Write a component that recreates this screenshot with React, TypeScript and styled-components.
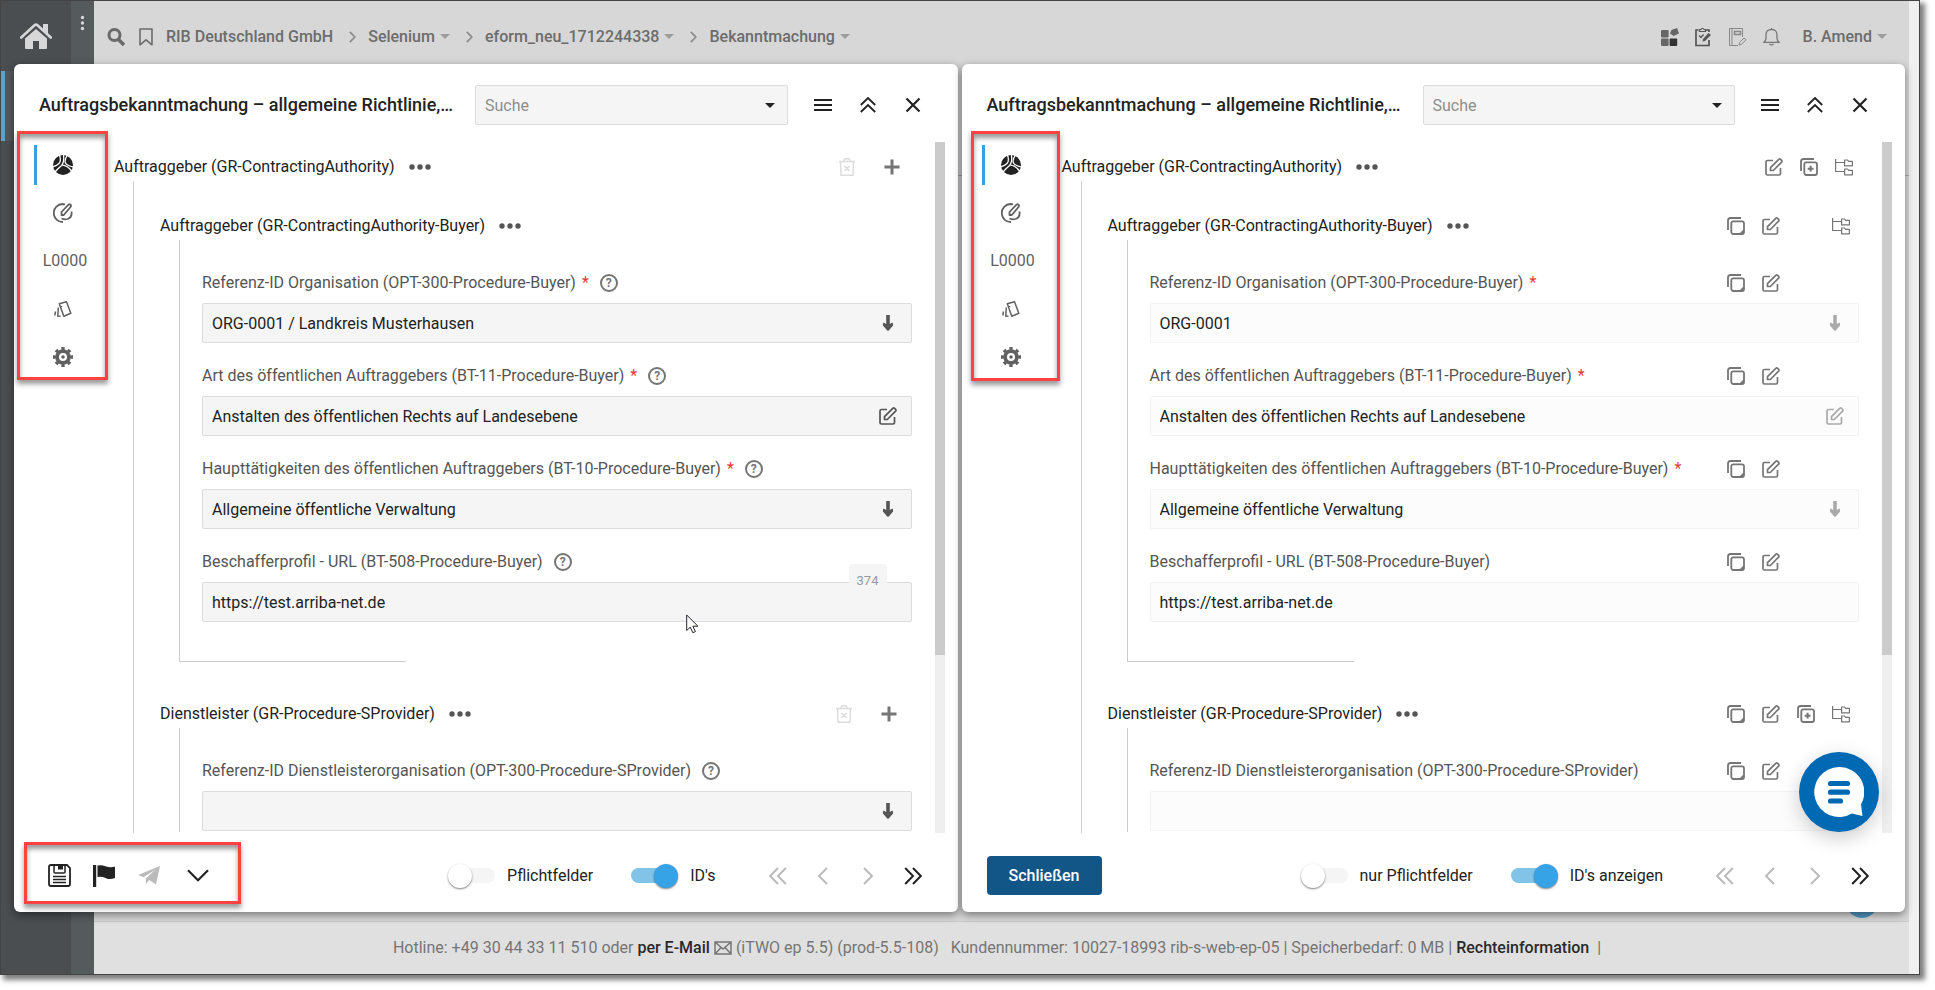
import React, { useId } from "react";
import styled, { createGlobalStyle, css } from "styled-components";

const GlobalStyle = createGlobalStyle`
  *, *::before, *::after { box-sizing: border-box; }
  body { margin: 0; background: #fff; font-family: Roboto, "Liberation Sans", sans-serif; font-size: 16px; line-height: 20px; color: #222; }
  button, input { font: inherit; color: inherit; }
  svg { display: block; flex: none; }
`;

/* ---------- application behind the dialogs ---------- */

const Frame = styled.div`
  position: relative;
  display: flex;
  height: calc(100vh - 15px);
  min-height: 700px;
  margin: 0 15px 15px 0;
  border: 1px solid #444;
  box-shadow: 4px 4px 5px 1px rgba(0, 0, 0, 0.5);
  background: #d8d8d8;
`;

const Sidebar = styled.nav`
  width: 70px;
  background: #4a4e51;
`;

const HomeLink = styled.a`
  display: flex;
  align-items: center;
  justify-content: center;
  height: 70px;
  color: #d7d7d7;
`;

const ActiveModule = styled.div`
  height: 70px;
  border-left: 4px solid #56a3d4;
  background: #55595c;
`;

const SideStrip = styled.div`
  display: flex;
  flex-direction: column;
  align-items: center;
  width: 23px;
  padding-top: 14px;
  background: #555a5d;
  color: #d7d7d7;
`;

const Workspace = styled.div`
  flex: 1;
  min-width: 0;
  display: flex;
  flex-direction: column;
`;

const TopBar = styled.header`
  display: flex;
  align-items: center;
  height: 71px;
  padding: 0 22px 0 13px;
  background: #d7d7d7;
  color: #6a6a6a;
`;

const Breadcrumb = styled.ol`
  flex: 1;
  display: flex;
  align-items: center;
  margin: 0;
  padding: 0 0 0 8px;
  list-style: none;
  font-weight: 500;
  color: #6c6c6c;
`;

const Crumb = styled.li`
  display: flex;
  align-items: center;
  a { color: inherit; text-decoration: none; }
`;

const Caret = styled.span<{ $color?: string }>`
  flex: none;
  width: 10px;
  border: 5px solid transparent;
  border-top-color: ${(p) => p.$color ?? "#9d9d9d"};
  border-bottom-width: 0;
`;

const CrumbCaret = styled(Caret)`
  margin-left: 5px;
`;

const CrumbSeparator = styled.span`
  margin: 0 12px 0 16px;
  color: #8d8d8d;
`;

const TopTools = styled.div`
  display: flex;
  align-items: center;
  gap: 10px;
  color: #666;
`;

const UserMenu = styled.button`
  display: flex;
  align-items: center;
  margin-left: 9px;
  padding: 0;
  border: 0;
  background: none;
  font-weight: 500;
  color: #6c6c6c;
`;

const WorkArea = styled.main`
  flex: 1;
  margin-top: 103px;
  border-top: 1px solid #aaa;
  display: flex;
  justify-content: flex-end;
  align-items: flex-end;
  padding: 0 31px 3px 0;
`;

const AssistDot = styled.span`
  width: 32px;
  height: 32px;
  border-radius: 50%;
  background: #5299c4;
`;

const StatusBar = styled.footer`
  display: flex;
  align-items: center;
  justify-content: center;
  height: 53px;
  padding-right: 9px;
  border-top: 1px solid #c9c9c9;
  background: #e0e0e0;
  color: #757575;
  white-space: pre;
  a { color: #2a2a2a; font-weight: 500; text-decoration: none; }
  svg { margin: 0 4px; }
`;

const WindowScroll = styled.div`
  width: 10px;
  background: #f0f0f0;
`;

/* ---------- dialogs ---------- */

const DialogLayer = styled.div`
  position: absolute;
  inset: 63px 14px 62px 13px;
  display: grid;
  grid-template-columns: 1fr 1fr;
  gap: 4px;
`;

const Dialog = styled.section`
  position: relative;
  display: flex;
  flex-direction: column;
  min-width: 0;
  min-height: 0;
  border-radius: 6px;
  background: #fff;
  box-shadow: 0 3px 8px rgba(0, 0, 0, 0.45);
`;

const DialogHeader = styled.header`
  display: flex;
  align-items: center;
  height: 78px;
  padding: 4px 33px 0 25px;
`;

const DialogTitle = styled.h2`
  flex: none;
  width: 436px;
  margin: 0;
  font-size: 18px;
  font-weight: 500;
  line-height: 24px;
  white-space: nowrap;
`;

const IconRow = styled.div<{ $gap?: number }>`
  display: flex;
  align-items: center;
  gap: ${(p) => p.$gap ?? 21}px;
`;

const IconButton = styled.button<{ $color?: string }>`
  display: flex;
  align-items: center;
  justify-content: center;
  flex: none;
  width: 24px;
  height: 24px;
  padding: 0;
  border: 0;
  background: none;
  color: ${(p) => p.$color ?? "#757575"};
`;

const InputBox = styled.div<{ $muted?: boolean }>`
  position: relative;
  display: flex;
  align-items: center;
  height: 40px;
  padding: 0 11px 0 9px;
  border: 1px solid ${(p) => (p.$muted ? "#f3f3f3" : "#dcdcdc")};
  border-radius: 2px;
  background: ${(p) => (p.$muted ? "#fcfcfc" : "#f5f5f5")};
  input {
    flex: 1;
    min-width: 0;
    height: 100%;
    padding: 0;
    border: 0;
    outline: 0;
    background: none;
    color: #222;
  }
  input::placeholder { color: #8d8d8d; opacity: 1; }
`;

const SearchBox = styled(InputBox)`
  flex: 1;
  margin-right: 23px;
  padding-right: 5px;
`;

const DialogBody = styled.div`
  flex: 1;
  min-height: 0;
  display: flex;
  padding-right: 13px;
`;

const Rail = styled.nav`
  width: 58px;
  margin-left: 20px;
  padding-top: 3px;
  display: flex;
  flex-direction: column;
  gap: 8px;
`;

const RailButton = styled.button<{ $active?: boolean }>`
  display: flex;
  align-items: center;
  justify-content: center;
  height: 40px;
  padding: 0 3px 0 0;
  border: 0;
  border-left: 3px solid ${(p) => (p.$active ? "#36a0e2" : "transparent")};
  background: none;
  color: ${(p) => (p.$active ? "#222" : "#616161")};
`;

const RailText = styled.span`
  padding-left: 4px;
`;

const FormScroll = styled.div`
  flex: 1;
  min-width: 0;
  display: flex;
  flex-direction: column;
  overflow: hidden;
  padding: 11px 23px 0 22px;
`;

const ScrollTrack = styled.div`
  width: 10px;
  background: #efefef;
`;

const ScrollThumb = styled.div`
  height: 513px;
  background: #cbcbcb;
`;

const GroupHeader = styled.div<{ $right: number }>`
  display: flex;
  align-items: center;
  flex: none;
  height: 28px;
  padding-right: ${(p) => p.$right}px;
`;

const GroupTitle = styled.h3`
  margin: 0 auto 0 0;
  display: flex;
  align-items: center;
  gap: 13px;
  font-size: 16px;
  font-weight: 400;
  white-space: nowrap;
`;

const GroupBody = styled.div<{ $outer?: boolean }>`
  flex: none;
  margin-left: 19px;
  border-left: 1px solid #ccc;
  ${(p) =>
    p.$outer
      ? css`padding: 31px 0 0 26px; flex: 1 0 auto;`
      : css`
          padding: 23px 0 1px 22px;
          display: flex;
          flex-direction: column;
          gap: 13px;
        `}
`;

const GroupEnd = styled.div`
  width: 227px;
  height: 39px;
  margin: 0 0 38px 19px;
  border: solid #ccc;
  border-width: 0 0 1px 1px;
`;

const FieldHead = styled.div`
  display: flex;
  align-items: center;
  height: 40px;
  padding-right: 76px;
  color: #555;
  white-space: nowrap;
  label { margin-right: 11px; }
  em { font-style: normal; color: #e53935; margin-left: 6px; }
`;

const FieldTools = styled(IconRow)`
  margin-left: auto;
`;

const HelpButton = styled.button`
  width: 18px;
  height: 18px;
  padding: 0;
  border: 2px solid #757575;
  border-radius: 50%;
  background: none;
  font-size: 12px;
  font-weight: 700;
  line-height: 14px;
  color: #757575;
`;

const Counter = styled.span`
  position: absolute;
  top: -19px;
  right: 24px;
  width: 38px;
  height: 24px;
  padding-top: 7px;
  border-radius: 3px 3px 0 0;
  background: #f5f5f5;
  font-size: 13px;
  line-height: 20px;
  text-align: center;
  color: #999;
`;

const DialogFooter = styled.footer`
  display: flex;
  align-items: center;
  justify-content: space-between;
  height: 79px;
  padding: 6px 33px 0 25px;
`;

const FooterActions = styled(IconRow)`
  padding-left: 8px;
`;

const MoreButton = styled(IconButton)`
  margin-left: 4px;
`;

const FooterControls = styled.div`
  display: flex;
  align-items: center;
`;

const ToggleLabel = styled.label`
  display: flex;
  align-items: center;
  gap: 12px;
  margin-right: 38px;
  &:last-of-type { margin-right: 50px; }
`;

const Switch = styled.input`
  position: relative;
  appearance: none;
  width: 47px;
  height: 24px;
  margin: 0;
  &::before {
    content: "";
    position: absolute;
    inset: 4px 0 5px 2px;
    border-radius: 8px;
    background: #f5f5f5;
  }
  &::after {
    content: "";
    position: absolute;
    top: 0;
    left: 0;
    width: 24px;
    height: 24px;
    border-radius: 50%;
    background: #fff;
    box-shadow: 0 1px 2px rgba(0, 0, 0, 0.5);
  }
  &:checked::before { background: #82c3e8; inset: 4px 2px 5px 0; }
  &:checked::after { left: 23px; background: #36a3e6; }
`;

const CloseButton = styled.button`
  width: 115px;
  height: 39px;
  border: 0;
  border-radius: 4px;
  background: #125687;
  font-weight: 500;
  color: #fff;
`;

const Highlight = styled.div<{ $left: number; $width: number; $height: number; $bottom?: boolean }>`
  position: absolute;
  ${(p) => (p.$bottom ? "bottom: 8px;" : "top: 67px;")}
  left: ${(p) => p.$left}px;
  width: ${(p) => p.$width}px;
  height: ${(p) => p.$height}px;
  border: 3px solid #fd4242;
  pointer-events: none;
  box-shadow: 0 4px 5px rgba(0, 0, 0, 0.4), inset 0 4px 5px rgba(0, 0, 0, 0.4);
`;

const Pointer = styled.svg`
  position: absolute;
  left: 672px;
  top: 550px;
`;

const ChatButton = styled.button`
  position: absolute;
  right: 40px;
  bottom: 142px;
  display: flex;
  align-items: center;
  justify-content: center;
  width: 80px;
  height: 80px;
  padding: 0;
  border: 0;
  border-radius: 50%;
  background: #0069b4;
  box-shadow: 0 6px 20px rgba(0, 0, 0, 0.2);
`;

/* ---------- icons ---------- */

type IconProps = { w?: number; h?: number; sw?: number; children: React.ReactNode };
const Line = ({ w = 18, h = 18, sw = 2, children }: IconProps) => (
  <svg width={w} height={h} viewBox={`0 0 ${w} ${h}`} fill="none" stroke="currentColor" strokeWidth={sw} aria-hidden="true">
    {children}
  </svg>
);
const Solid = ({ w = 18, h = 18, children }: IconProps) => (
  <svg width={w} height={h} viewBox={`0 0 ${w} ${h}`} fill="currentColor" aria-hidden="true">
    {children}
  </svg>
);

const HomeIcon = () => (
  <Solid w={32} h={26}>
    <path d="M16 6 5 15.5V25q0 1 1 1h7v-8h6v8h7q1 0 1-1v-9.500z" />
    <path d="M1.200 14.500 14.500 2.200q1.500-1.200 3 0L30.800 14.500" fill="none" stroke="#4a4e51" strokeWidth="5" />
    <path d="M23 1h5v11l-5-4.500z" />
    <path d="M1.200 14.500 14.500 2.200q1.500-1.200 3 0L30.800 14.500" fill="none" stroke="currentColor" strokeWidth="2.600" strokeLinecap="round" />
  </Solid>
);
const KebabIcon = () => (
  <Solid w={5} h={16}>
    <circle cx="2.500" cy="2.500" r="1.700" />
    <circle cx="2.500" cy="8" r="1.700" />
    <circle cx="2.500" cy="13.500" r="1.700" />
  </Solid>
);
const SearchIcon = () => (
  <Line sw={3}>
    <circle cx="7.500" cy="7" r="5.500" />
    <path d="m11.500 11.500 5.500 5.500" strokeWidth="3.500" />
  </Line>
);
const BookmarkIcon = () => (
  <Line w={14} sw={1.6}>
    <path d="M1 1h12v15.800l-6-5-6 5z" strokeLinejoin="round" />
  </Line>
);
const SeparatorIcon = () => (
  <Line w={7} h={12} sw={1.8}>
    <path d="m.8.8 5 5.200-5 5.200" />
  </Line>
);
const AppsIcon = () => (
  <Solid>
    <rect x="0" y="2" width="7.600" height="7.500" rx="1" />
    <rect x="0" y="10.500" width="7.600" height="7.500" rx="1" />
    <rect x="8.600" y="10.500" width="7.600" height="7.500" rx="1" fill="#333" />
    <path d="m10.500 2 5.500-2 2 5.500L12.500 8 9 5.500z" />
  </Solid>
);
const ClipboardIcon = () => (
  <Line w={17} h={20} sw={1.7}>
    <path d="M3.500 3H1v15.500h13V13M11 3h3v2" />
    <path d="M4.500 4.500V2.500H6q1.500-2.500 3 0h1.500v2z" strokeWidth="1.200" />
    <path d="m4 8.500 2 2 2.500-3" strokeWidth="1.300" />
    <path d="M7.500 14.500 8 12l5.500-6 2.500 2-6 6z" fill="currentColor" stroke="none" />
  </Line>
);
const NotebookIcon = () => (
  <Line sw={1}>
    <path d="M9 17.500H.5V.500h13V9M3 .500v17" />
    <rect x="5.500" y="3.500" width="6" height="3" strokeWidth="1.500" />
    <path d="m10 17 .6-2.500L15 10l2 1.800-4.500 4.600z" />
  </Line>
);
const BellIcon = () => (
  <Line w={17} h={19} sw={1.300}>
    <path d="M8.500 1v1.500M1 15.300h15q-2-2-2-4V8q0-5.500-5.500-5.500T3 8v3.300q0 2-2 4zM6.500 17q2 1.800 4 0" />
  </Line>
);
const MailIcon = () => (
  <Line w={18} h={14} sw={1.500}>
    <path d="M1 1h16v12H1zM1 1l8 7 8-7M1 13l6-6.500M17 13l-6-6.500" />
  </Line>
);
const MenuIcon = () => (
  <Line h={14} sw={2}>
    <path d="M0 2h18M0 7h18M0 12h18" />
  </Line>
);
const DoubleUpIcon = () => (
  <Line w={16} h={16} sw={1.8}>
    <path d="m.8 8 7.200-7L15.200 8M.8 15 8 8l7.200 7" />
  </Line>
);
const CloseIcon = () => (
  <Line w={16} h={16} sw={2.200}>
    <path d="m1.500 1.500 13 13m0-13-13 13" />
  </Line>
);
const DotsIcon = () => (
  <Solid w={22} h={6}>
    <circle cx="3" cy="3" r="2.700" />
    <circle cx="11" cy="3" r="2.700" />
    <circle cx="19" cy="3" r="2.700" />
  </Solid>
);
const TrashIcon = () => (
  <Line w={16} sw={1.500}>
    <path d="M0 3.500h16M1.500 3.500l.5 13.700h12l.5-13.700M4.500 3.500 6 .8h4l1.500 2.700M5.500 8l5 5m0-5-5 5" />
  </Line>
);
const PlusIcon = () => (
  <Line w={16} h={16} sw={3}>
    <path d="M8 .5v15M.5 8h15" />
  </Line>
);
const EditIcon = () => (
  <Line sw={1.700}>
    <path d="M8 2.500H2.500Q1 2.500 1 4v11.500Q1 17 2.500 17H14q1.500 0 1.500-1.500V10" />
    <path d="M5.500 12.500V9.700L13.800 1.300q.9-.8 1.800 0l1 1q.8.900 0 1.800L8.300 12.500z" strokeLinejoin="round" />
  </Line>
);
const CopyBase = () => (
  <>
    <path d="M1 13V3.500Q1 1 3.500 1H14" />
    <rect x="4.300" y="4.300" width="12.700" height="12.700" rx="2" />
  </>
);
const CopyIcon = () => (
  <Line sw={1.800}>
    <CopyBase />
    <path d="M16.500 13v3.500H13z" fill="currentColor" strokeWidth="1" />
  </Line>
);
const CopyPlusIcon = () => (
  <Line sw={1.800}>
    <CopyBase />
    <path d="M10.600 7.800v5.800M7.700 10.700h5.800" strokeWidth="2" />
  </Line>
);
const TreeIcon = () => (
  <Line sw={1.200}>
    <path d="M.6 1v12.500H9M.6 4.500H9" />
    <path d="M9.600 2h3l1 1.300h3.800v4.500H9.600zM9.600 11h3l1 1.300h3.800v4.500H9.600z" strokeLinejoin="round" />
  </Line>
);
const ArrowDownIcon = () => (
  <Solid w={12} h={16}>
    <path d="M4.200 0h3.600v9L10.500 7.500q.6.200.6 3L7 15.300q-1 1-2 0L.9 10.500q0-2.800.6-3L4.200 9z" />
  </Solid>
);
const BallIcon = () => (
  <svg width="20" height="20" viewBox="0 0 20 20" aria-hidden="true">
    <circle cx="10" cy="10" r="10" fill="#222" />
    <g fill="none" stroke="#fff" strokeWidth="1.300">
      <path d="M6.500 0Q8.500 6 6 8.500T-1 12" />
      <path d="M10.500 0Q11.500 8 8 11T2 17" />
      <path d="M14.500 0Q11 5 12.500 8T21 12" />
      <path d="M9.300 10.200Q14.500 10.500 18.500 16" />
    </g>
  </svg>
);
const SignIcon = () => (
  <Line w={20} h={20} sw={1.800}>
    <path d="M12 1.300Q10.500 1 9.500 1A9 9 0 0 0 10 19M18.500 8.500q.8 6-4 7.500-3 .8-6-.5" />
    <path d="M8.500 12V9l7-7.300q1-.8 2 0t0 2.300L10.800 12z" strokeLinejoin="round" />
  </Line>
);
const CardsIcon = () => (
  <Line w={18} h={16} sw={1.500}>
    <path d="m5.300 2.800 7.200-2 4.300 11.500-7 2.900z" strokeLinejoin="round" />
    <path d="m4.300 6.500-.500 8.500 2.700.3M1.500 10.500.8 14.500" />
    <path d="M7.500 5v1" />
  </Line>
);
const GearIcon = () => (
  <Line w={20} h={20} sw={3.800}>
    <circle cx="10" cy="10" r="5.900" />
    <circle cx="10" cy="10" r="8.400" strokeWidth="3.200" pathLength="80" strokeDasharray="5 5" strokeDashoffset="2.500" />
    <circle cx="10" cy="10" r="1.800" fill="currentColor" stroke="none" />
  </Line>
);
const SaveIcon = () => (
  <Line w={23} h={23} sw={1.800}>
    <path d="M3 1h16l3 3v16q0 2-2 2H3q-2 0-2-2V3q0-2 2-2z" />
    <path d="M6 1.500V8q0 1 1 1h9q1 0 1-1V1.500" strokeWidth="1.500" />
    <path d="M10 3.500h5" strokeWidth="4" />
    <path d="M5 12.500h13M5 15.500h13M5 18.500h13" strokeWidth="1.500" />
  </Line>
);
const FlagIcon = () => (
  <Solid w={22} h={22}>
    <path d="M0 0h3.200v22H0z" />
    <path d="M4.500.500q4-1 8 .7t9.500.5V13q-5 2-9 .2T4.500 12z" />
  </Solid>
);
const SendIcon = () => (
  <Solid w={22} h={19}>
    <path d="M22 0 0 9l5.500 2.200L17 4 7.800 12.500V18l3.500-4L18 18.500z" />
  </Solid>
);
const ChevronDownIcon = () => (
  <Line w={22} h={13} sw={2.200}>
    <path d="m1 1.300 10 10 10-10" />
  </Line>
);
const ChevronIcon = ({ double, right }: { double?: boolean; right?: boolean }) => (
  <Line w={18} h={18} sw={2}>
    <g transform={right ? "matrix(-1 0 0 1 18 0)" : undefined}>
      {double ? <path d="M9 1 1.200 9 9 17M16.800 1 9 9l7.800 8" /> : <path d="M13 1 5 9l8 8" />}
    </g>
  </Line>
);
const ChatIcon = () => (
  <svg width="50" height="50" viewBox="0 0 50 50" aria-hidden="true">
    <path d="M25 0a25 25 0 1 0 13 46.500l10.500 2.500-1.500-11.500A25 25 0 0 0 25 0z" fill="#fff" />
    <path d="M16.500 16.500h17M16.500 25.200h17M16.500 34h10" stroke="#0069b4" strokeWidth="5.200" strokeLinecap="round" />
  </svg>
);

/* ---------- parts ---------- */

type Tool = "copy" | "edit" | "add" | "tree" | "gap";
const toolIcons = { copy: <CopyIcon />, edit: <EditIcon />, add: <CopyPlusIcon />, tree: <TreeIcon /> };
const toolNames = { copy: "Kopieren", edit: "Bearbeiten", add: "Gruppe kopieren", tree: "Struktur" };

const Tools = ({ items }: { items: Tool[] }) => (
  <FieldTools $gap={11}>
    {items.map((t, i) =>
      t === "gap" ? (
        <IconButton key={i} as="span" />
      ) : (
        <IconButton key={i} aria-label={toolNames[t]}>
          {toolIcons[t]}
        </IconButton>
      )
    )}
  </FieldTools>
);

const EditTools = () => (
  <IconRow>
    <IconButton aria-label="Löschen" $color="#dcdcdc" disabled><TrashIcon /></IconButton>
    <IconButton aria-label="Hinzufügen"><PlusIcon /></IconButton>
  </IconRow>
);

type GroupProps = { title: string; readOnly: boolean; tools: Tool[]; top?: boolean; fixed?: boolean };
const GroupHead = ({ title, readOnly, tools, top, fixed }: GroupProps) => (
  <GroupHeader $right={(top ? 0 : 3) + (readOnly ? 3 : 8)}>
    <GroupTitle>
      {title}
      <IconButton aria-label="Weitere Aktionen" $color="#555"><DotsIcon /></IconButton>
    </GroupTitle>
    {readOnly ? <Tools items={tools} /> : !fixed && <EditTools />}
  </GroupHeader>
);

type FieldProps = {
  label: string;
  value: string;
  readOnly: boolean;
  required?: boolean;
  action?: "arrow" | "edit";
  counter?: string;
};
const Field = ({ label, value, readOnly, required, action, counter }: FieldProps) => {
  const id = useId();
  return (
    <div>
      <FieldHead>
        <label htmlFor={id}>
          {label}
          {required && <em>*</em>}
        </label>
        {readOnly ? <Tools items={["copy", "edit"]} /> : <HelpButton aria-label="Hilfe">?</HelpButton>}
      </FieldHead>
      <InputBox $muted={readOnly}>
        <input id={id} type="text" defaultValue={value} readOnly={readOnly} />
        {action && (
          <IconButton aria-label="Auswählen" $color={readOnly ? "#aaa" : "#555"}>
            {action === "arrow" ? <ArrowDownIcon /> : <EditIcon />}
          </IconButton>
        )}
        {counter && <Counter>{counter}</Counter>}
      </InputBox>
    </div>
  );
};

const Toggle = ({ label, on }: { label: string; on?: boolean }) => (
  <ToggleLabel>
    <Switch type="checkbox" defaultChecked={on} />
    {label}
  </ToggleLabel>
);

const Pager = () => (
  <IconRow>
    <IconButton aria-label="Erste" $color="#bbb"><ChevronIcon double /></IconButton>
    <IconButton aria-label="Zurück" $color="#bbb"><ChevronIcon /></IconButton>
    <IconButton aria-label="Weiter" $color="#bbb"><ChevronIcon right /></IconButton>
    <IconButton aria-label="Letzte" $color="#222"><ChevronIcon double right /></IconButton>
  </IconRow>
);

type PanelProps = { readOnly?: boolean; organisation: string; footer: React.ReactNode; children?: React.ReactNode };
const NoticePanel = ({ readOnly = false, organisation, footer, children }: PanelProps) => (
  <Dialog>
    <DialogHeader>
      <DialogTitle>Auftragsbekanntmachung – allgemeine Richtlinie,…</DialogTitle>
      <SearchBox>
        <input type="text" placeholder="Suche" aria-label="Suche" />
        <IconButton aria-label="Suchvorschläge"><Caret $color="#222" /></IconButton>
      </SearchBox>
      <IconRow>
        <IconButton aria-label="Menü" $color="#222"><MenuIcon /></IconButton>
        <IconButton aria-label="Einklappen" $color="#222"><DoubleUpIcon /></IconButton>
        <IconButton aria-label="Schließen" $color="#222"><CloseIcon /></IconButton>
      </IconRow>
    </DialogHeader>
    <DialogBody>
      <Rail>
        <RailButton $active aria-label="Formular"><BallIcon /></RailButton>
        <RailButton aria-label="Unterschrift"><SignIcon /></RailButton>
        <RailButton><RailText>L0000</RailText></RailButton>
        <RailButton aria-label="Karten"><CardsIcon /></RailButton>
        <RailButton aria-label="Einstellungen"><GearIcon /></RailButton>
      </Rail>
      <FormScroll>
        <GroupHead top title="Auftraggeber (GR-ContractingAuthority)" readOnly={readOnly} tools={["edit", "add", "tree"]} />
        <GroupBody $outer>
          <GroupHead
            fixed
            title="Auftraggeber (GR-ContractingAuthority-Buyer)"
            readOnly={readOnly}
            tools={["copy", "edit", "gap", "tree"]}
          />
          <GroupBody>
            <Field label="Referenz-ID Organisation (OPT-300-Procedure-Buyer)" value={organisation} readOnly={readOnly} required action="arrow" />
            <Field label="Art des öffentlichen Auftraggebers (BT-11-Procedure-Buyer)" value="Anstalten des öffentlichen Rechts auf Landesebene" readOnly={readOnly} required action="edit" />
            <Field label="Haupttätigkeiten des öffentlichen Auftraggebers (BT-10-Procedure-Buyer)" value="Allgemeine öffentliche Verwaltung" readOnly={readOnly} required action="arrow" />
            <Field label="Beschafferprofil - URL (BT-508-Procedure-Buyer)" value="https://test.arriba-net.de" readOnly={readOnly} counter={readOnly ? undefined : "374"} />
          </GroupBody>
          <GroupEnd />
          <GroupHead title="Dienstleister (GR-Procedure-SProvider)" readOnly={readOnly} tools={["copy", "edit", "add", "tree"]} />
          <GroupBody>
            <Field label="Referenz-ID Dienstleisterorganisation (OPT-300-Procedure-SProvider)" value="" readOnly={readOnly} action={readOnly ? undefined : "arrow"} />
          </GroupBody>
        </GroupBody>
      </FormScroll>
      <ScrollTrack>
        <ScrollThumb />
      </ScrollTrack>
    </DialogBody>
    <DialogFooter>{footer}</DialogFooter>
    {children}
  </Dialog>
);

const Separator = () => (
  <CrumbSeparator>
    <SeparatorIcon />
  </CrumbSeparator>
);

export default function App() {
  return (
    <>
      <GlobalStyle />
      <Frame>
        <Sidebar>
          <HomeLink href="#" aria-label="Startseite"><HomeIcon /></HomeLink>
          <ActiveModule />
        </Sidebar>
        <SideStrip><KebabIcon /></SideStrip>
        <Workspace>
          <TopBar>
            <IconRow $gap={9}>
              <SearchIcon />
              <IconButton aria-label="Lesezeichen" $color="#6c6c6c"><BookmarkIcon /></IconButton>
            </IconRow>
            <Breadcrumb>
              <Crumb><a href="#">RIB Deutschland GmbH</a><Separator /></Crumb>
              <Crumb><a href="#">Selenium</a><CrumbCaret /><Separator /></Crumb>
              <Crumb><a href="#">eform_neu_1712244338</a><CrumbCaret /><Separator /></Crumb>
              <Crumb><a href="#">Bekanntmachung</a><CrumbCaret /></Crumb>
            </Breadcrumb>
            <TopTools>
              <IconButton aria-label="Anwendungen" $color="#666"><AppsIcon /></IconButton>
              <IconButton aria-label="Aufgaben" $color="#555"><ClipboardIcon /></IconButton>
              <IconButton aria-label="Notizen" $color="#888"><NotebookIcon /></IconButton>
              <IconButton aria-label="Benachrichtigungen" $color="#777"><BellIcon /></IconButton>
              <UserMenu>B. Amend<CrumbCaret /></UserMenu>
            </TopTools>
          </TopBar>
          <WorkArea><AssistDot /></WorkArea>
          <StatusBar>
            <span>Hotline: +49 30 44 33 11 510 oder <a href="#">per E-Mail</a></span>
            <MailIcon />
            <span>(iTWO ep 5.5) (prod-5.5-108)   Kundennummer: 10027-18993 rib-s-web-ep-05 | Speicherbedarf: 0 MB | <a href="#">Rechteinformation</a>  |</span>
          </StatusBar>
        </Workspace>
        <WindowScroll />

        <DialogLayer>
          <NoticePanel
            organisation="ORG-0001 / Landkreis Musterhausen"
            footer={
              <>
                <FooterActions>
                  <IconButton aria-label="Speichern" $color="#222"><SaveIcon /></IconButton>
                  <IconButton aria-label="Prüfen" $color="#222"><FlagIcon /></IconButton>
                  <IconButton aria-label="Senden" $color="#bbb"><SendIcon /></IconButton>
                  <MoreButton aria-label="Mehr" $color="#222"><ChevronDownIcon /></MoreButton>
                </FooterActions>
                <FooterControls>
                  <Toggle label="Pflichtfelder" />
                  <Toggle label="ID's" on />
                  <Pager />
                </FooterControls>
              </>
            }
          >
            <Highlight $left={3} $width={91} $height={249} />
            <Highlight $bottom $left={10} $width={217} $height={62} />
            <Pointer width="14" height="21" viewBox="0 0 14 21" aria-hidden="true">
              <path d="M.7 1v15.500l3.600-3.300 2.500 5.500 2.600-1.100-2.500-5.400h5z" fill="#fff" stroke="#223" strokeWidth="1" />
            </Pointer>
          </NoticePanel>
          <NoticePanel
            readOnly
            organisation="ORG-0001"
            footer={
              <>
                <CloseButton>Schließen</CloseButton>
                <FooterControls>
                  <Toggle label="nur Pflichtfelder" />
                  <Toggle label="ID's anzeigen" on />
                  <Pager />
                </FooterControls>
              </>
            }
          >
            <Highlight $left={9} $width={89} $height={250} />
          </NoticePanel>
        </DialogLayer>
        <ChatButton aria-label="Chat öffnen"><ChatIcon /></ChatButton>
      </Frame>
    </>
  );
}
